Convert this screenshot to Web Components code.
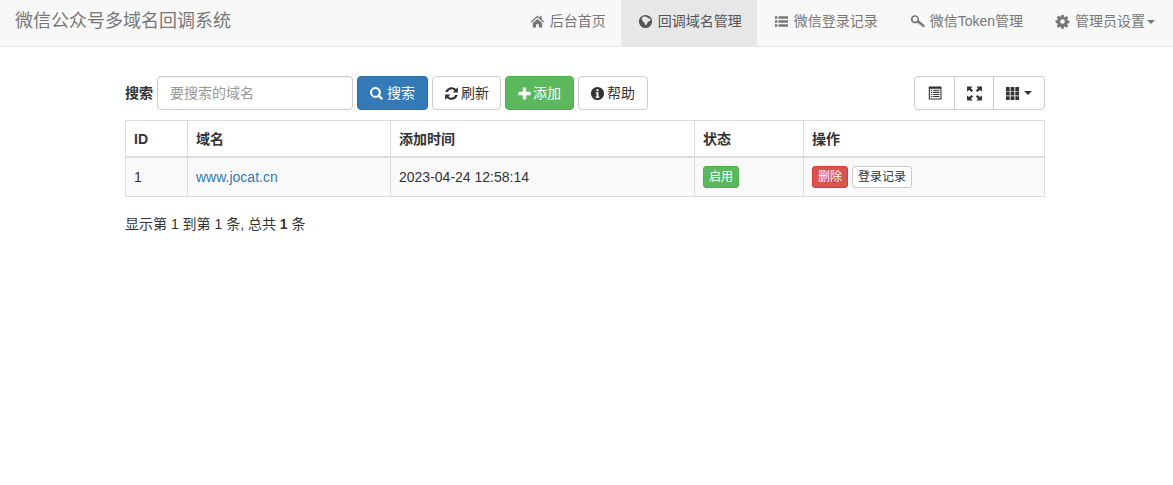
<!DOCTYPE html>
<html lang="zh"><head><meta charset="utf-8"><title>微信公众号多域名回调系统</title>
<style>
html,body{margin:0;padding:0;background:#fff;color:#333;font:14px/20px "Liberation Sans","Noto Sans CJK SC",sans-serif}
</style></head><body>
<app-shell>
  <top-bar slot="nav" brand="微信公众号多域名回调系统">
    <nav-link icon="home">后台首页</nav-link>
    <nav-link icon="globe" active>回调域名管理</nav-link>
    <nav-link icon="list">微信登录记录</nav-link>
    <nav-link icon="key">微信Token管理</nav-link>
    <nav-link icon="cog" caret>管理员设置</nav-link>
  </top-bar>
  <tool-bar>
    <b slot="label">搜索</b>
    <search-box slot="left" placeholder="要搜索的域名"></search-box>
    <ui-btn slot="left" kind="primary" icon="search" gap="3">搜索</ui-btn>
    <ui-btn slot="left" icon="refresh" gap="2" pr="11">刷新</ui-btn>
    <ui-btn slot="left" kind="success" icon="plus" gap="1">添加</ui-btn>
    <ui-btn slot="left" icon="info" gap="2">帮助</ui-btn>
    <btn-group slot="right"></btn-group>
  </tool-bar>
  <domain-table></domain-table>
  <page-info>显示第 1 到第 1 条, 总共 <b>1</b> 条</page-info>
</app-shell>
<script>
const ICONS={
home:'<path d="M8 1.500.8 8l1 1.100L8 3.500l6.200 5.600 1-1.100-2.700-2.400V2.400h-2.200v1.800z"/><path d="M3 9.700 8 5.200l5 4.500V14.500H9.500v-3.700h-3v3.700H3z"/>',
globe:'<path fill-rule="evenodd" d="M8 1a7 7 0 1 0 0 14A7 7 0 0 0 8 1zM5 3.200c1.300-.5 2.700-.6 4 0 .9.300 1.500 1 2.200 1.300.8.300 1.700.5 2.200 1.200.1 1-.6 1.700-1.500 2.100-.9.500-1.600 1.200-2.100 2.100-.4.900-1 1.800-1.900 2.300-.5-.8-.5-1.800-.9-2.600-.5-.9-1.500-1.300-2-2.200C3.600 6.200 3.700 4.500 5 3.200z"/>',
list:'<path d="M1 2.500h2.600v2.500H1zM4.800 2.500H15v2.500H4.800zM1 6.750h2.600v2.500H1zM4.800 6.750H15v2.500H4.800zM1 11h2.600v2.500H1zM4.800 11H15v2.500H4.800z"/>',
key:'<path fill-rule="evenodd" d="M5.400 1.200a4.400 4.400 0 1 0 2.300 8.100l.9.900 1.300-.2.200 1.400 1.400.1.200 1.400 1.400.1.900.9h1.400v-1.800L9.400 6.700a4.400 4.400 0 0 0-4-5.500zm0 1.800a2.600 2.600 0 1 1 0 5.200 2.600 2.600 0 0 1 0-5.200z"/>',
cog:'<path fill-rule="evenodd" d="M6.700 1h2.600l.3 1.900 1.100.5 1.600-1.200 1.900 1.900-1.200 1.600.5 1.100 1.900.3v2.600l-1.900.3-.5 1.100 1.200 1.600-1.900 1.900-1.600-1.200-1.100.5-.3 1.900H6.700l-.3-1.900-1.100-.5-1.600 1.200-1.900-1.900 1.200-1.600-.5-1.100L.6 9.300V6.700l1.900-.3.5-1.100-1.200-1.600 1.900-1.900 1.600 1.200 1.100-.5zM8 5.500a2.500 2.500 0 1 0 0 5 2.500 2.500 0 0 0 0-5z"/>',
search:'<path fill-rule="evenodd" d="M6.800 1a5.800 5.800 0 1 0 3.300 10.600l3.300 3.400 1.700-1.700-3.400-3.300A5.800 5.800 0 0 0 6.800 1zm0 2.200a3.600 3.600 0 1 1 0 7.200 3.600 3.600 0 0 1 0-7.200z"/>',
refresh:'<path d="M8.100 1.200c1.800 0 3.500.8 4.700 2L14.800 1.300v5.600H9.200l2-2a4.300 4.300 0 0 0-7.100 1.500H1.400C2 3.700 4.700 1.200 8.100 1.200zM1.200 9.100h5.600l-2 2a4.300 4.300 0 0 0 7.100-1.500h2.700C14 12.300 11.300 14.800 7.900 14.800c-1.800 0-3.500-.8-4.700-2l-2 1.900z"/>',
plus:'<path d="M6.200 1.500h3.600v4.700h4.700v3.600H9.800v4.700H6.200V9.800H1.500V6.200h4.700z"/>',
info:'<path fill-rule="evenodd" d="M8 1a7 7 0 1 0 0 14A7 7 0 0 0 8 1zM6.900 3.400h2.200v2.100H6.900zM6.100 6.700H9v4.600h.9v1.400H6.100v-1.400H7V8.100h-.9z"/>',
table:'<path fill-rule="evenodd" d="M1.800 1.500h12.700v13H1.800zM2.900 3.700v9.700h10.500V3.700zM3.800 4.700h1.500v1.100H3.800zM6.200 4.700h6.200v1.100H6.200zM3.800 6.800h1.500v1.100H3.800zM6.200 6.800h6.200v1.100H6.200zM3.800 8.900h1.500V10H3.800zM6.200 8.900h6.200V10H6.200zM3.800 11h1.500v1.100H3.800zM6.200 11h6.200v1.100H6.200z"/>',
full:'<path d="M1 1.500h5.200L4.600 3.100l2.100 2.100L5.200 6.700l-2.100-2.100L1 6.200zM15 1.500v4.700l-2.100-1.600-2.100 2.100-1.500-1.500 2.100-2.100-1.600-1.600zM1 14.500V9.800l2.100 1.600 2.100-2.100 1.500 1.500-2.100 2.100 1.600 1.600zM15 14.500H9.800l1.600-1.600-2.100-2.100 1.500-1.500 2.100 2.100 2.100-1.600z"/>',
grid:'<path d="M1 1h4v4.200H1zM6 1h4v4.200H6zM11 1h4v4.200h-4zM1 5.900h4v4.200H1zM6 5.900h4v4.200H6zM11 5.900h4v4.200h-4zM1 10.800h4V15H1zM6 10.800h4V15H6zM11 10.800h4V15h-4z"/>'
};
class UiIcon extends HTMLElement{connectedCallback(){
  const s=this.getAttribute('size')||15;
  this.attachShadow({mode:'open'}).innerHTML=`<style>:host{display:inline-flex;width:${s}px;height:${s}px;flex:none}svg{width:100%;height:100%;fill:currentColor;display:block}</style><svg viewBox="0 0 16 16">${ICONS[this.getAttribute('name')]}</svg>`;
}}
customElements.define('ui-icon',UiIcon);
class AppShell extends HTMLElement{connectedCallback(){
  this.attachShadow({mode:'open'}).innerHTML=`<style>:host{display:block}main{padding:29px 128px 0 125px;display:flex;flex-direction:column}</style><slot name="nav"></slot><main><slot></slot></main>`;
}}
customElements.define('app-shell',AppShell);
class TopBar extends HTMLElement{connectedCallback(){
  this.attachShadow({mode:'open'}).innerHTML=`<style>:host{display:flex;justify-content:space-between;height:46px;background:#f8f8f8;border-bottom:1px solid #e7e7e7;padding:0 3px 0 15px}
  .brand{font-size:18px;line-height:42px;color:#777}nav{display:flex}</style><div class="brand">${this.getAttribute('brand')}</div><nav><slot></slot></nav>`;
}}
customElements.define('top-bar',TopBar);
class NavLink extends HTMLElement{connectedCallback(){
  const a=this.hasAttribute('active');
  this.attachShadow({mode:'open'}).innerHTML=`<style>:host{display:flex;align-items:center;height:46px;padding:0 15px;color:${a?'#555':'#777'};background:${a?'#e7e7e7':'transparent'};white-space:nowrap}
  .i{width:22px;display:flex;padding-left:2px;box-sizing:border-box}span{position:relative;top:-2px;display:flex;align-items:center}.c{width:0;height:0;border:4px solid transparent;border-top-color:currentColor;border-bottom:0;margin:2px 0 0 2px}</style>
  <span><div class="i"><ui-icon name="${this.getAttribute('icon')}" size="15"></ui-icon></div><slot></slot>${this.hasAttribute('caret')?'<div class="c"></div>':''}</span>`;
}}
customElements.define('nav-link',NavLink);
class ToolBar extends HTMLElement{connectedCallback(){
  this.attachShadow({mode:'open'}).innerHTML=`<style>:host{display:flex;justify-content:space-between;align-items:center;height:34px;margin-bottom:10px}
  .l{display:flex;align-items:center;gap:4px}</style><div class="l"><slot name="label"></slot><slot name="left"></slot></div><slot name="right"></slot>`;
}}
customElements.define('tool-bar',ToolBar);
class SearchBox extends HTMLElement{connectedCallback(){
  this.attachShadow({mode:'open'}).innerHTML=`<style>:host{display:block}input{display:block;box-sizing:border-box;width:196px;height:34px;padding:6px 12px;font:inherit;color:#555;background:#fff;border:1px solid #ccc;border-radius:4px;box-shadow:inset 0 1px 1px rgba(0,0,0,.075);outline:0}input::placeholder{color:#999;opacity:1}</style><input placeholder="${this.getAttribute('placeholder')}">`;
}}
customElements.define('search-box',SearchBox);
class UiBtn extends HTMLElement{connectedCallback(){
  const k=this.getAttribute('kind');
  const c={primary:['#337ab7','#2e6da4','#fff'],success:['#5cb85c','#4cae4c','#fff']}[k]||['#fff','#ccc','#333'];
  this.attachShadow({mode:'open'}).innerHTML=`<style>:host{display:flex;align-items:center;gap:${this.getAttribute('gap')}px;box-sizing:border-box;height:34px;padding:0 ${this.getAttribute('pr')||12}px 0 11px;background:${c[0]};border:1px solid ${c[1]};border-radius:4px;color:${c[2]};white-space:nowrap}</style><ui-icon name="${this.getAttribute('icon')}"></ui-icon><slot></slot>`;
}}
customElements.define('ui-btn',UiBtn);
class BtnGroup extends HTMLElement{connectedCallback(){
  this.attachShadow({mode:'open'}).innerHTML=`<style>:host{display:flex;box-sizing:border-box;height:34px;border:1px solid #ccc;border-radius:4px;color:#333;background:#fff}
  div{display:flex;align-items:center;justify-content:center;box-sizing:border-box;width:39px}div+div{border-left:1px solid #ccc}div:first-child{width:38px}div:last-child{width:51px;gap:4px;justify-content:flex-start;padding-left:11px}
  i{width:0;height:0;border:4px solid transparent;border-top-color:currentColor;border-bottom:0}</style>
  <div><ui-icon name="table" size="16"></ui-icon></div><div><ui-icon name="full" size="17"></ui-icon></div><div><ui-icon name="grid" size="15"></ui-icon><i></i></div>`;
}}
customElements.define('btn-group',BtnGroup);
class TinyBtn extends HTMLElement{connectedCallback(){
  const k=this.getAttribute('kind');
  const c={danger:['#d9534f','#d43f3a','#fff'],success:['#5cb85c','#4cae4c','#fff']}[k]||['#fff','#ccc','#333'];
  this.attachShadow({mode:'open'}).innerHTML=`<style>:host{display:inline-block;box-sizing:border-box;height:22px;padding:0 5px;font-size:12px;line-height:20px;background:${c[0]};border:1px solid ${c[1]};border-radius:3px;color:${c[2]};white-space:nowrap;vertical-align:top}</style><slot></slot>`;
}}
customElements.define('tiny-btn',TinyBtn);
class DomainTable extends HTMLElement{connectedCallback(){
  this.attachShadow({mode:'open'}).innerHTML=`<style>:host{display:block}
  table{border-collapse:collapse;table-layout:fixed;width:919px;background:#fff}
  th,td{border:1px solid #ddd;padding:8px;text-align:left;line-height:20px}
  th{font-weight:700;padding-top:8px;padding-bottom:7px;border-bottom:2px solid #ddd}
  td{background:#f9f9f9;height:22px}
  a{color:#337ab7;text-decoration:none}
  .b{display:flex;gap:4px}</style>
  <table><colgroup><col style="width:62px"><col style="width:203px"><col style="width:304px"><col style="width:109px"><col style="width:241px"></colgroup>
  <thead><tr><th>ID</th><th>域名</th><th>添加时间</th><th>状态</th><th>操作</th></tr></thead>
  <tbody><tr><td>1</td><td><a href="#">www.jocat.cn</a></td><td>2023-04-24 12:58:14</td><td><div class="b"><tiny-btn kind="success">启用</tiny-btn></div></td><td><div class="b"><tiny-btn kind="danger">删除</tiny-btn><tiny-btn>登录记录</tiny-btn></div></td></tr></tbody></table>`;
}}
customElements.define('domain-table',DomainTable);
class PageInfo extends HTMLElement{connectedCallback(){
  this.attachShadow({mode:'open'}).innerHTML=`<style>:host{display:block;margin-top:17px}</style><slot></slot>`;
}}
customElements.define('page-info',PageInfo);
</script>
</body></html>
